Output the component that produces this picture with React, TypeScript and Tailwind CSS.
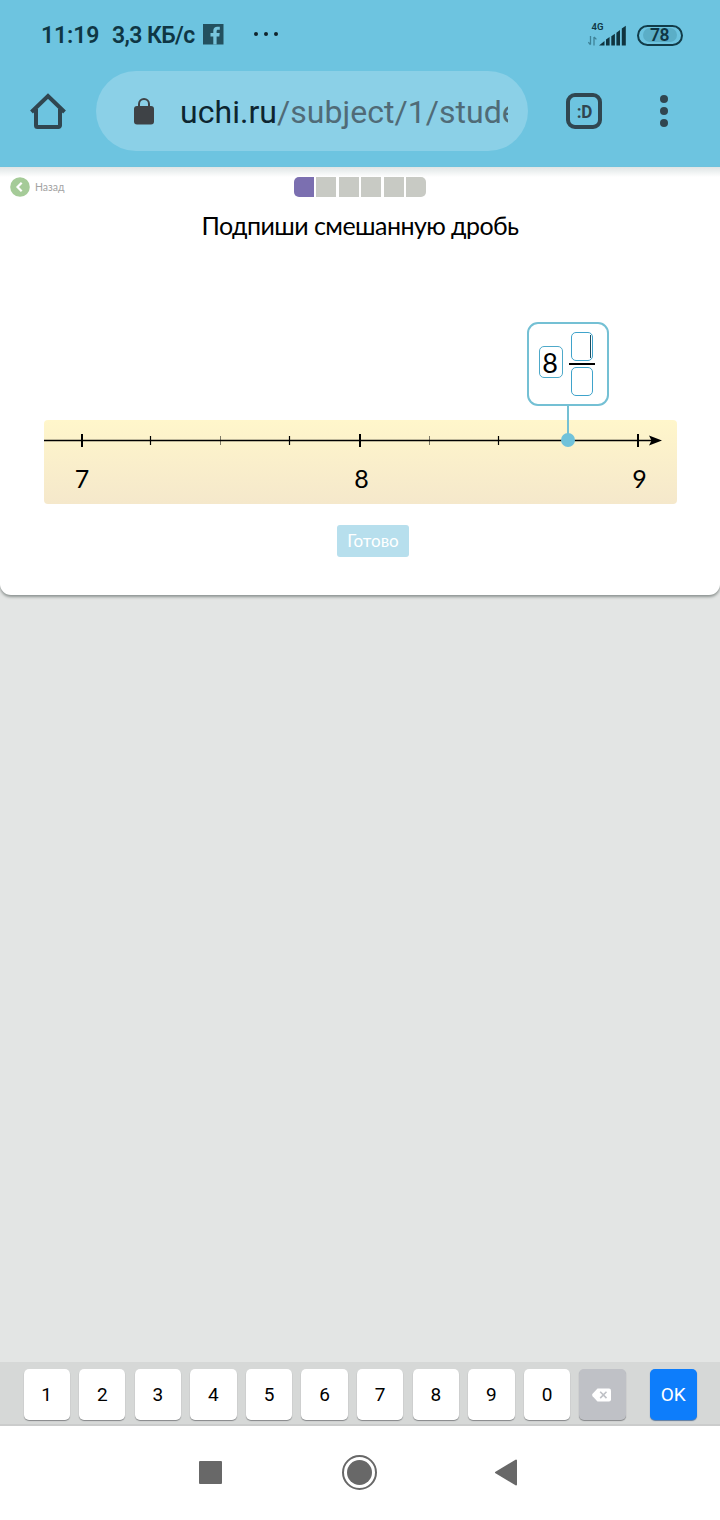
import { useState } from 'react'

const DIGITS = ['1', '2', '3', '4', '5', '6', '7', '8', '9', '0']

// axis ticks, x is measured from the left edge of the band
const TICKS = [
  { x: 38, label: '7' },
  { x: 106.5 },
  { x: 176.5, faint: true },
  { x: 245.5 },
  { x: 316, label: '8' },
  { x: 385.5, faint: true },
  { x: 454.5 },
  { x: 594, label: '9' },
]

function StatusBar() {
  return (
    <div className="flex h-[71px] items-center pl-[41px] pr-[37.5px] font-['Roboto','Noto_Sans',sans-serif] text-[#0f3644]">
      <span className="w-[71px] whitespace-nowrap text-[23px] font-semibold leading-none tracking-[-0.1px]">11:19</span>
      <span className="w-[91px] whitespace-nowrap text-[23px] font-semibold leading-none tracking-[-0.6px]">3,3 КБ/с</span>
      <svg className="mb-[3px]" width="21" height="21" viewBox="0 0 21 21">
        <rect width="20.5" height="20.5" fill="#23505f" />
        <path d="M10.3 20.5V12.4H7.5V9.1h2.8V6.8c0-2.7 1.6-4.1 4-4.1h2.5v3.1h-1.7c-1.2 0-1.5.6-1.5 1.5v1.8h3.1l-.4 3.3h-2.7v8.1z" fill="#78c5dd" />
      </svg>
      <div className="mb-[3px] ml-[30px] flex gap-[6px]">
        <span className="size-1 rounded-full bg-[#10242b]" />
        <span className="size-1 rounded-full bg-[#10242b]" />
        <span className="size-1 rounded-full bg-[#10242b]" />
      </div>
      <div className="ml-auto flex items-center">
        <div className="flex h-[26px] w-[14px] flex-col items-center justify-between">
          <span className="-mt-0.5 pl-1 text-[9.5px] font-semibold leading-[11px]">4G</span>
          <svg width="9" height="10" viewBox="0 0 9 10" className="-ml-1.5 mb-[3px]" fill="none" stroke="#3e8297" strokeWidth="1.3">
            <path d="M2.5 0v8.5M.3 6.2l2.2 2.5M6 9.5V1M8.4 3.4 6 1" />
          </svg>
        </div>
        <svg className="-ml-1" width="28" height="22" viewBox="0 0 28 22" fill="#10343f">
          <path d="M0 20.5 5.5 16v4.5zM7 14.5l3.6-2.4v8.4H7zM12.3 11.3l3.6-2.6v11.8h-3.6zM17.4 7.7 21 5v15.5h-3.6zM22.8 3.5 26.8.8v19.7h-4z" />
        </svg>
        <div className="mb-px ml-[10px] flex h-[21px] w-[46px] items-center justify-center rounded-full border-2 border-[#123c49] px-[4px]">
          <span className="flex h-[14px] w-full items-center justify-center rounded-full bg-[#5baec7] pt-0.5 text-[17.5px] font-semibold leading-none tracking-[-0.5px]">78</span>
        </div>
      </div>
    </div>
  )
}

function AddressBar() {
  return (
    <div className="flex h-20 items-center">
      <svg className="ml-[29px]" width="38" height="38" viewBox="0 0 38 38" fill="none" stroke="#304650" strokeWidth="4" strokeLinejoin="round">
        <path d="M2.5 20 19 4l16.5 16" strokeLinejoin="miter" />
        <path d="M7 17v16.5A1.5 1.5 0 0 0 8.5 35h21a1.5 1.5 0 0 0 1.5-1.5V17" />
      </svg>
      <div className="ml-[29px] flex h-20 w-[432px] items-center rounded-full bg-[#8bd0e7] pl-[38px] pr-5">
        <svg width="20" height="27" viewBox="0 0 20 27">
          <rect y="8" width="20" height="18.5" rx="3" fill="#3e4246" />
          <path d="M5 10V6a5 5 0 0 1 10 0v4" fill="none" stroke="#3e4246" strokeWidth="2" />
        </svg>
        <div className="ml-[26px] mt-px w-[328px] overflow-hidden whitespace-nowrap font-['Roboto','Noto_Sans',sans-serif] text-[32px] leading-[44px] tracking-[0.04px] text-[#506b77]">
          <span className="text-[#0d2530]">uchi.ru</span>/subject/1/stude
        </div>
      </div>
      <div className="ml-[38px] flex size-9 items-center justify-center rounded-[9px] border-4 border-[#304650] font-['Roboto',sans-serif] text-[19px] font-bold leading-none tracking-[-0.5px] text-[#304650]">
        <span className="scale-x-90">:D</span>
      </div>
      <div className="ml-[58px] flex flex-col gap-1">
        <span className="size-2 rounded-full bg-[#304650]" />
        <span className="size-2 rounded-full bg-[#304650]" />
        <span className="size-2 rounded-full bg-[#304650]" />
      </div>
    </div>
  )
}

function NumberLine({ whole }: { whole: string }) {
  return (
    <div className="mx-auto mt-[81px] w-[633px]">
      <div className="relative ml-[483px] flex h-[84px] w-[82px] items-center rounded-[11px] border-2 border-[#74c0d4] bg-white pl-[10px]">
        <div className="mb-1 flex h-8 w-6 items-center justify-center rounded-[5px] border-[1.5px] border-[#4ea9c9] pr-px text-[27px] leading-none text-black">
          {whole}
        </div>
        <div className="ml-[6px] flex flex-col items-center">
          <div className="flex h-[29px] w-[22px] justify-end rounded-[5px] border-[1.5px] border-[#3fa3cb] py-[2px] pr-px">
            <span className="w-px bg-[#1c4c60]" />
          </div>
          <div className="my-[2px] h-[2px] w-[26px] bg-black" />
          <div className="h-[29px] w-[22px] rounded-[5px] border-[1.5px] border-[#3fa3cb]" />
        </div>
        {/* stem down to the marked point */}
        <span className="absolute left-[38px] top-[82px] z-10 h-8 w-[2px] bg-[#74c0d4]" />
        <span className="absolute left-[32px] top-[109px] z-10 size-[14px] rounded-full bg-[#70c2da]" />
      </div>
      <svg
        className="mt-[14px] rounded-[4px] bg-linear-to-b from-[#fff6cb] to-[#f5e8cb] font-['Lato','Noto_Sans',sans-serif]"
        width="633"
        height="84"
        viewBox="0 0 633 84"
      >
        <path d="M0 20.5h610" stroke="#000" strokeWidth="1.3" />
        {TICKS.map(t =>
          t.label ? (
            <path key={t.x} d={`M${t.x} 14v13`} stroke="#000" strokeWidth="2" />
          ) : (
            <path key={t.x} d={`M${t.x} 16v9`} stroke="#000" strokeWidth={t.faint ? 0.5 : 1.2} />
          )
        )}
        <path d="M605 15.5l13 5-13 5 2.5-5z" />
        {TICKS.filter(t => t.label).map(t => (
          <text key={t.label} x={t.x + (t.label === '7' ? 0 : 1.5)} y="67.5" fontSize="25" textAnchor="middle">
            {t.label}
          </text>
        ))}
      </svg>
    </div>
  )
}

function TaskCard({ whole }: { whole: string }) {
  return (
    <div className="h-[428px] rounded-b-[11px] bg-white shadow-[0_2px_3px_#8d9391] font-['Lato','Noto_Sans',sans-serif]">
      <div className="h-[10px] bg-linear-to-b from-[#dfe5e5] to-white" />
      <div className="flex h-5 items-center pl-[10px]">
        <svg width="20" height="20" viewBox="0 0 20 20">
          <circle cx="10" cy="10" r="9.8" fill="#a5cb98" />
          <path d="M11.7 5.7 7.5 10l4.2 4.3" fill="none" stroke="#fff" strokeWidth="2.2" />
        </svg>
        <span className="ml-[5px] w-[31px] text-[10.5px] leading-none text-[#a3a3a3]">Назад</span>
        <div className="ml-[228px] flex gap-[2.4px] overflow-hidden rounded-[5px]">
          <span className="h-5 w-5 bg-[#7b6fb0]" />
          {[2, 3, 4, 5, 6].map(n => (
            <span key={n} className="h-5 w-5 bg-[#c8cac4]" />
          ))}
        </div>
      </div>
      <h1 className="mt-[12px] h-8 whitespace-nowrap text-center text-[25px] leading-8 tracking-[-0.56px] text-black">Подпиши смешанную дробь</h1>
      <NumberLine whole={whole} />
      <button className="ml-[337px] mt-[21px] flex h-8 w-[72px] items-center justify-center rounded-[3px] bg-[#b7dfed] text-[17px] text-white">
        Готово
      </button>
    </div>
  )
}

function Keypad({ onDigit, onErase }: { onDigit: (d: string) => void; onErase: () => void }) {
  return (
    <div className="flex h-16 gap-[9.3px] border-b-2 border-[#cbcccc] bg-[#d6d8d7] pl-[23.5px] pt-[7px] font-['Roboto',sans-serif] text-[19px]">
      {DIGITS.map(d => (
        <button
          key={d}
          onClick={() => onDigit(d)}
          className="h-[51px] w-[46.3px] rounded-[5px] bg-white pt-0.5 text-black shadow-[0_1px_1px_#858789]"
        >
          {d}
        </button>
      ))}
      <button onClick={onErase} className="flex h-[51px] w-[47px] items-center justify-center rounded-[5px] bg-[#bfc1c6] pr-[3px] shadow-[0_1px_1px_#858789]">
        <svg width="19" height="14" viewBox="0 0 19 14">
          <path d="M5.5.4H17a2 2 0 0 1 2 2v9.2a2 2 0 0 1-2 2H5.5L.6 8.2a2 2 0 0 1 0-2.4z" fill="#fff" />
          <path d="m8.2 3.8 6.3 6.3m0-6.3-6.3 6.3" stroke="#bfc1c6" strokeWidth="1.6" />
        </svg>
      </button>
      <button className="ml-[14.3px] h-[51px] w-[46.5px] rounded-[5px] bg-[#0d7dfb] pt-0.5 text-white shadow-[0_1px_1px_#5c7ba0]">OK</button>
    </div>
  )
}

function NavigationBar() {
  return (
    <div className="flex h-[94px] items-center bg-white pb-[2px] pl-[198.5px]">
      <span className="size-[23px] rounded-[1px] bg-[#686868]" />
      <div className="ml-[120px] flex size-[35px] items-center justify-center rounded-full border-[2.5px] border-[#686868]">
        <span className="size-[25px] rounded-full bg-[#686868]" />
      </div>
      <svg className="ml-[117px]" width="24" height="27" viewBox="0 0 24 27">
        <path d="M22 1.5v24L2 13.5z" fill="#686868" stroke="#686868" strokeWidth="2" strokeLinejoin="round" />
      </svg>
    </div>
  )
}

export default function App() {
  const [whole, setWhole] = useState('8')

  return (
    <div className="flex h-[1520px] w-[720px] flex-col overflow-hidden bg-[#e3e5e4]">
      <header className="h-[167px] shrink-0 bg-[#6dc4e0]">
        <StatusBar />
        <AddressBar />
      </header>
      <TaskCard whole={whole} />
      <div className="mt-auto">
        <Keypad onDigit={setWhole} onErase={() => setWhole('')} />
        <NavigationBar />
      </div>
    </div>
  )
}
